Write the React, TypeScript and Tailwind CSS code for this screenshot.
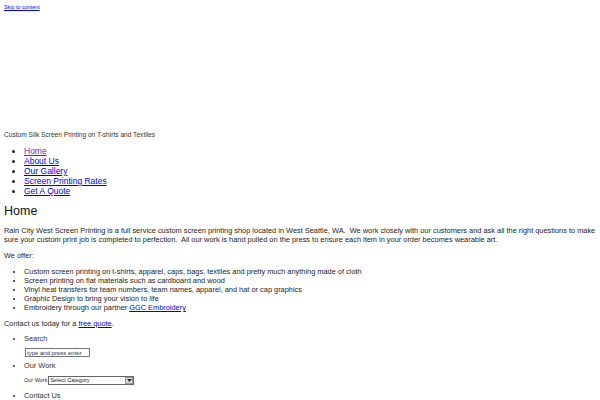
export default function App() {
  const offers = [
    "Custom screen printing on t-shirts, apparel, caps, bags, textiles and pretty much anything made of cloth",
    "Screen printing on flat materials such as cardboard and wood",
    "Vinyl heat transfers for team numbers, team names, apparel, and hat or cap graphics",
    "Graphic Design to bring your vision to life",
  ]

  return (
    <div className="h-[400px] w-[600px] overflow-hidden bg-white px-[4px] text-[#222] [font-family:'Liberation_Sans',Arial,sans-serif]">
      <div className="pt-[3px] text-[5.4px] leading-[8px]">
        <a href="#content" className="text-[#00e] underline">
          Skip to content
        </a>
      </div>

      {/* header image area, empty */}
      <div className="h-[119px]" />

      <p className="text-[6.6px] leading-[10px] text-[#333]">Custom Silk Screen Printing on T-shirts and Textiles</p>

      <ul className="mt-[6px] list-disc pl-[20px] text-[8.5px] leading-[10px]">
        <li>
          <a href="#" className="text-[#6b2a9b] underline">Home</a>
        </li>
        <li>
          <a href="#" className="text-[#00e] underline">About Us</a>
        </li>
        <li>
          <a href="#" className="text-[#00e] underline">Our Gallery</a>
        </li>
        <li>
          <a href="#" className="text-[#00e] underline">Screen Printing Rates</a>
        </li>
        <li>
          <a href="#" className="text-[#00e] underline">Get A Quote</a>
        </li>
      </ul>

      <h1 className="mt-[7px] text-[12.5px] leading-[16px] text-[#111]">Home</h1>

      <p className="mt-[7px] text-[7.4px] leading-[9px] text-[#222]">
        Rain City West Screen Printing is a full service custom screen printing shop located in West Seattle, WA.&nbsp; We
        work closely with our customers and ask all the right questions to make sure your custom print job is completed to
        perfection.&nbsp; All our work is hand pulled on the press to ensure each item in your order becomes wearable art.
      </p>

      <p className="mt-[7px] text-[7.4px] leading-[9px] text-[#222]">We offer:</p>

      <ul className="mt-[7px] list-disc pl-[20px] text-[7.4px] leading-[9px] text-[#222]">
        {offers.map((o) => (
          <li key={o}>{o}</li>
        ))}
        <li>
          Embroidery through our partner{" "}
          <a href="#" className="text-[#00e] underline">GGC Embroidery</a>
        </li>
      </ul>

      <p className="mt-[7px] text-[7.4px] leading-[9px] text-[#222]">
        Contact us today for a{" "}
        <a href="#" className="text-[#00e] underline">free quote</a>.
      </p>

      <ul className="mt-[6px] list-disc pl-[20px] text-[7.4px] leading-[10px] text-[#333]">
        <li>
          Search
          <div className="mt-[4px] mb-[4px] ml-[1px]">
            <input
              type="text"
              defaultValue="type and press enter"
              className="block h-[9px] w-[65px] border border-[#777] bg-white px-[1px] text-[6px] leading-[7px] text-[#333] outline-none"
            />
          </div>
        </li>
        <li className="mt-[4px]">
          Our Work
          <div className="mt-[4px] mb-[4px] flex items-center gap-[1px] text-[5.5px]">
            <span>Our Work</span>
            <div className="flex h-[9px] w-[86px] items-center border border-[#666] bg-white">
              <span className="flex-1 pl-[1px] text-[5.5px] leading-[7px] text-[#222]">Select Category</span>
              <span className="flex h-[7px] w-[8px] items-center justify-center border border-[#999] bg-[#ddd]">
                <svg width="5" height="3" viewBox="0 0 5 3">
                  <path d="M0 0h5L2.5 3z" fill="#222" />
                </svg>
              </span>
            </div>
          </div>
        </li>
        <li className="mt-[6px]">Contact Us</li>
      </ul>
    </div>
  )
}
